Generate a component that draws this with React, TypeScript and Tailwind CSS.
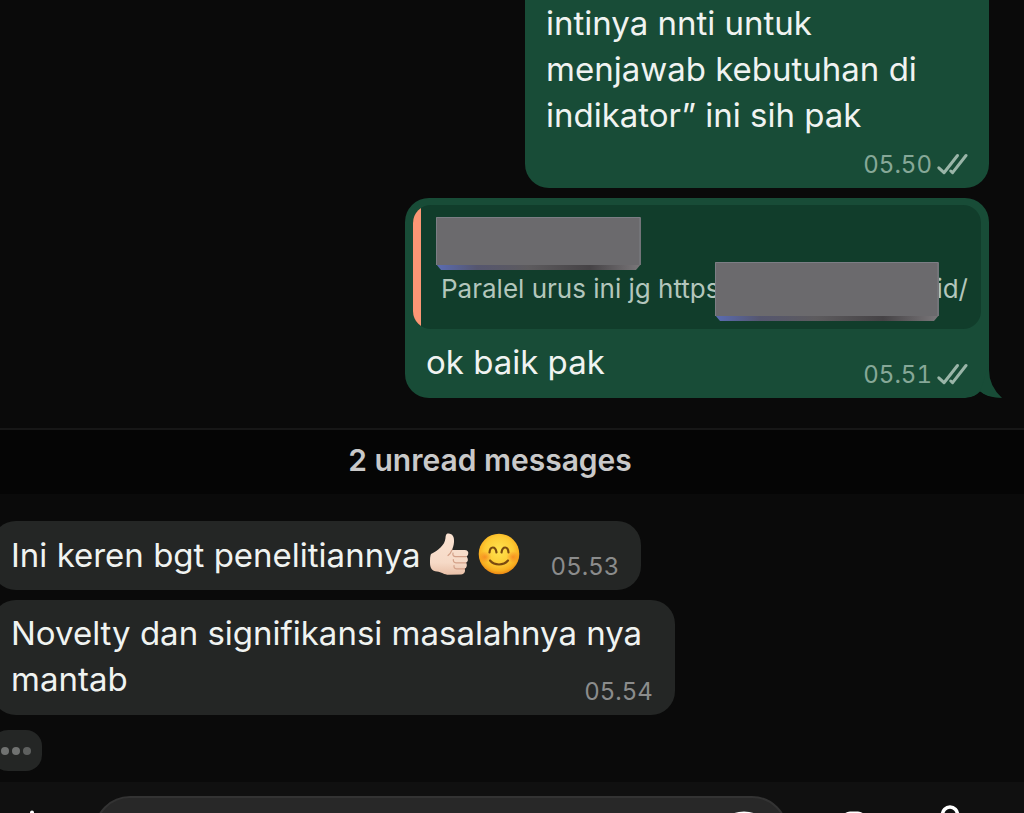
import type { ReactNode } from "react";

// Double check shown next to the time of a sent message
const DoubleCheck = () => (
  <svg
    className="w-8 h-6 shrink-0 text-[#9ab5a8]"
    viewBox="0 0 32 24"
    fill="none"
    stroke="currentColor"
    strokeWidth="3"
    strokeLinecap="round"
    strokeLinejoin="round"
    role="img"
    aria-label="Delivered"
  >
    <path d="M2.800 14.800 L8 19.700 L21.500 2.500" />
    <path d="M14.800 18 L16.600 19.700 L30 2.500" />
  </svg>
);

const ThumbsUp = () => (
  <svg
    className="w-10 h-11"
    viewBox="0 0 40 44"
    role="img"
    aria-label="Thumbs up"
  >
    <defs>
      <linearGradient id="skin" x1="0" y1="0" x2="0" y2="1">
        <stop offset="0" stopColor="#fbe3d2" />
        <stop offset="0.7" stopColor="#f6dac7" />
        <stop offset="1" stopColor="#e9c0a8" />
      </linearGradient>
    </defs>
    <path
      d="M2 22 C6 20 9 18 11.500 15.500 C14.500 12.500 16 10 16.500 6 C16.700 3.500 17 1.500 19.500 1.500 C23.500 1.500 25.500 5 25 10 C24.800 13 24 15.500 23 18 L35.500 18 C38.500 18 39.800 20 39.200 22 C38.900 23.400 38 24.200 37.200 24.500 C39.200 25.500 39.800 30 36.800 30.800 C38.500 32 38.200 36 35.500 36.800 C36.800 38.500 35.800 42.300 32 42.500 L20 42.800 C15 42.800 12.500 40 8 39.500 C3 39 1 36 1 31 C1 27 1 24 2 22 Z"
      fill="url(#skin)"
    />
    <path
      d="M37 24.600 L26.500 24.600 C24.500 24.600 23.500 23 24 21 M36.800 30.800 L27 30.800 C25 30.800 24.200 29.500 24.300 27.500 M35.500 36.800 L27.500 36.800 C25.500 36.800 24.800 35.500 25 33.500 M23 18 C22 20.500 21 22 19 23.500"
      fill="none"
      stroke="#d3a088"
      strokeWidth="1.200"
      strokeLinecap="round"
    />
  </svg>
);

const SmilingFace = () => (
  <svg
    className="w-11 h-11"
    viewBox="0 0 44 44"
    role="img"
    aria-label="Smiling face"
  >
    <defs>
      <radialGradient id="face" cx="0.5" cy="0.42" r="0.58">
        <stop offset="0" stopColor="#ffe34f" />
        <stop offset="0.6" stopColor="#fdcb34" />
        <stop offset="0.86" stopColor="#f8ad1f" />
        <stop offset="1" stopColor="#e98513" />
      </radialGradient>
      <radialGradient id="cheek">
        <stop offset="0" stopColor="#f5791e" stopOpacity="0.7" />
        <stop offset="1" stopColor="#f5791e" stopOpacity="0" />
      </radialGradient>
    </defs>
    <circle cx="22" cy="22" r="20.300" fill="url(#face)" />
    <ellipse cx="8" cy="25" rx="6.500" ry="6" fill="url(#cheek)" />
    <ellipse cx="36" cy="25" rx="6.500" ry="6" fill="url(#cheek)" />
    <g fill="none" stroke="#7a4a10" strokeWidth="2.200" strokeLinecap="round">
      <path d="M12.500 20.500 C13 13.800 18.500 13.800 19.500 20.500" />
      <path d="M24.500 20.500 C25.500 13.800 31 13.800 31.500 20.500" />
      <path d="M13 28.500 C17.500 33.800 26.500 33.800 31 28.500" />
    </g>
  </svg>
);

interface PlateProps {
  id: string;
  width: number;
  height: number;
}

// Grey plate that hides a private part of the quoted message
const Plate = ({ id, width, height }: PlateProps) => (
  <svg
    className="block w-full h-full"
    viewBox={`0 0 ${width} ${height}`}
    preserveAspectRatio="none"
    aria-hidden="true"
  >
    <defs>
      <linearGradient id={id} x1="0" y1="0" x2="1" y2="0">
        <stop offset="0" stopColor="#5a6cb4" />
        <stop offset="0.2" stopColor="#55566f" />
        <stop offset="0.45" stopColor="#5d5b5e" />
        <stop offset="0.75" stopColor="#454245" />
        <stop offset="1" stopColor="#7b787b" />
      </linearGradient>
    </defs>
    <path
      d={`M0 ${height - 6} H${width} L${width - 5} ${height} H5 Z`}
      fill={`url(#${id})`}
    />
    <rect width={width} height={height - 5} rx="1" fill="#6b6a6d" />
    <path
      d={`M0.500 ${height - 5} V0.500 H${width - 1} V${height - 5}`}
      fill="none"
      stroke="#7c7e85"
      strokeWidth="1"
    />
  </svg>
);

interface TimeProps {
  value: string;
  sent?: boolean;
}

const Time = ({ value, sent = false }: TimeProps) => (
  <div
    className={
      sent
        ? "flex items-center justify-end gap-1 text-2xl leading-7 tabular-nums text-[#86a898]"
        : "text-2xl leading-7 tabular-nums text-[#8b8c8c]"
    }
  >
    <time>{value}</time>
    {sent && <DoubleCheck />}
  </div>
);

const ReceivedBubble = ({ children }: { children: ReactNode }) => (
  <div className="flex w-fit -ml-2 rounded-[24px] bg-[#242625] pl-[19px] pr-[22px]">
    {children}
  </div>
);

const Composer = () => (
  <form
    className="flex shrink-0 items-center bg-[#101010] pt-[14px] pb-6 text-white"
    onSubmit={(e) => e.preventDefault()}
  >
    <button type="button" aria-label="Attach" className="ml-2 w-12 h-12">
      <svg viewBox="0 0 48 48" fill="none" stroke="currentColor" strokeWidth="4" strokeLinecap="round">
        <path d="M24 4.500 V43.500 M4.500 24 H43.500" />
      </svg>
    </button>
    <div className="ml-[38px] flex h-[72px] flex-1 items-center rounded-[36px] border-2 border-[#333333] bg-[#282828] pr-[18px]">
      <input
        aria-label="Message"
        className="min-w-0 flex-1 bg-transparent px-6 text-[33px] outline-none"
      />
      <button type="button" aria-label="Stickers" className="w-12 h-12">
        <svg viewBox="0 0 48 48" fill="none" stroke="currentColor" strokeWidth="3">
          <path d="M24 5 Q43 5 43 24 V28 L28 43 H24 Q5 43 5 24 Q5 5 24 5 Z M43 28 H36 Q28 28 28 36 V43" />
        </svg>
      </button>
    </div>
    <button type="button" aria-label="Camera" className="ml-[42px] w-12 h-12">
      <svg viewBox="0 0 48 48" fill="none" stroke="currentColor" strokeWidth="3">
        <path d="M20 5 H28 Q32 5 34 9 L36 12 H40 Q45 12 45 17 V37 Q45 42 40 42 H8 Q3 42 3 37 V17 Q3 12 8 12 H12 L14 9 Q16 5 20 5 Z" />
        <circle cx="24" cy="26" r="9" />
      </svg>
    </button>
    <button
      type="button"
      aria-label="Record voice message"
      className="ml-12 mr-[50px] w-12 h-14"
    >
      <svg viewBox="0 0 48 56" fill="none" stroke="currentColor" strokeWidth="3.600" strokeLinecap="round">
        <rect x="16.500" y="3" width="15" height="32" rx="7.500" />
        <path d="M8 26 Q8 42 24 42 Q40 42 40 26 M24 42 V52" />
      </svg>
    </button>
  </form>
);

const App = () => {
  return (
    <div className="flex h-screen flex-col overflow-hidden bg-[#0a0a0a] font-['Inter','Liberation_Sans',sans-serif] text-[33px] leading-[46px] text-[#f0f3f1]">
      <main className="shrink-0">
        {/* Sent messages */}
        <div className="flex flex-col items-end gap-[10px] pr-[35px]">
          <div className="w-[464px] rounded-b-[24px] bg-[#184c37] px-[21px] pb-[9px]">
            <p>
              intinya nnti untuk
              <br />
              menjawab kebutuhan di
              <br />
              indikator” ini sih pak
            </p>
            <div className="pt-[13px]">
              <Time value="05.50" sent />
            </div>
          </div>

          <div className="relative w-[584px] rounded-[24px] bg-[#184c37] px-2 pt-[7px]">
            <blockquote className="relative h-[124px] overflow-hidden rounded-[18px] bg-[#113d2b]">
              <div className="absolute inset-y-0 left-0 w-2 bg-[#fc9775]" />
              <p className="flex justify-between pt-[66px] pl-7 pr-[13px] text-[26px] leading-9 text-[#b3c6bc]">
                <span>Paralel urus ini jg https</span>
                <span>id/</span>
              </p>
              <div className="absolute left-[23px] top-3 h-[53px] w-[205px]">
                <Plate id="plate-name" width={205} height={53} />
              </div>
              <div className="absolute right-[42px] top-[57px] h-[59px] w-[224px]">
                <Plate id="plate-link" width={224} height={59} />
              </div>
            </blockquote>
            <div className="flex items-end justify-between px-[13px] pt-[10px] pb-[9px]">
              <p className="pb-1">ok baik pak</p>
              <Time value="05.51" sent />
            </div>
            {/* Tail of the last bubble */}
            <svg
              className="absolute bottom-0 -right-[13px] h-10 w-9"
              viewBox="0 0 36 40"
              aria-hidden="true"
            >
              <path d="M14 33.500 Q21 40 36 40 Q23 28 23 12 V0 L21 12 Z" fill="#184c37" />
              <path d="M0 40 Q9 39 14 33.500 Q20 39 30 40 Z" fill="#0a0a0a" />
            </svg>
          </div>
        </div>

        <div className="mt-[30px] border-t-2 border-[#171717] bg-[#050505] pr-11 pt-[7px] pb-[11px] text-center text-[30px] font-semibold text-[#c9c9c9]">
          2 unread messages
        </div>

        {/* Received messages */}
        <div className="flex flex-col gap-[10px] pt-[27px]">
          <ReceivedBubble>
            <p className="flex pt-[11px] pb-3">
              Ini keren bgt penelitiannya
              <span className="flex gap-2 pl-2">
                <ThumbsUp />
                <SmilingFace />
              </span>
            </p>
            <div className="self-end pl-[30px] pb-[9px]">
              <Time value="05.53" />
            </div>
          </ReceivedBubble>

          <ReceivedBubble>
            <p className="pt-[10px] pb-[13px]">
              Novelty dan signifikansi masalahnya nya
              <br />
              mantab
            </p>
            <div className="-ml-[58px] self-end pb-[9px]">
              <Time value="05.54" />
            </div>
          </ReceivedBubble>

          <div
            className="mt-[5px] -ml-2 flex h-[41px] w-[50px] items-center justify-end gap-[3px] rounded-[16px] bg-[#242625] pr-[11px]"
            role="status"
            aria-label="Typing"
          >
            <span className="size-2 rounded-full bg-[#707271]" />
            <span className="size-2 rounded-full bg-[#707271]" />
            <span className="size-2 rounded-full bg-[#5e605f]" />
          </div>
        </div>
        <div className="h-[11px]" />
      </main>
      <Composer />
    </div>
  );
};

export default App;
